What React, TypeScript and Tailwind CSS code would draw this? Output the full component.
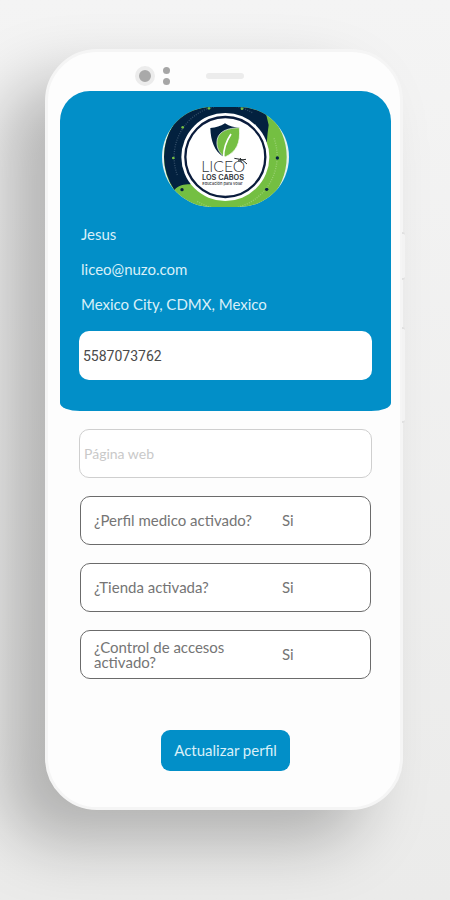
import { useState } from "react";

const SETTINGS = [
  { id: "medical", label: "¿Perfil medico activado?" },
  { id: "store", label: "¿Tienda activada?" },
  { id: "access", label: "¿Control de accesos activado?" },
];

export default function App() {
  return (
    <div className="min-h-screen overflow-hidden bg-linear-to-b from-[#f4f4f4] to-[#ebebea] pt-[49px] pr-[47px] pb-[88px] pl-[45px] font-[Lato,sans-serif] text-[15px] leading-[15px]">
      <div className="relative rounded-[52px] border-3 border-[#f5f5f5] bg-[#fdfdfd] pr-[9px] pb-9 pl-3 shadow-[-40px_32px_64px_rgba(0,0,0,0.25)]">
        <SideButtons />
        <PhoneSensors />
        <main>
          <ProfileHeader />
          <ProfileForm />
        </main>
      </div>
    </div>
  );
}

function PhoneSensors() {
  return (
    <div className="flex h-[39px] items-center pt-2 pl-[75px]">
      <div className="h-5 w-5 rounded-full border-4 border-[#ececec] bg-[#a9a9a9]" />
      <div className="ml-2 flex flex-col gap-1">
        <div className="h-[7px] w-[7px] rounded-full bg-[#a6a6a6]" />
        <div className="h-[7px] w-[7px] rounded-full bg-[#a6a6a6]" />
      </div>
      <div className="ml-9 h-[6px] w-[38px] rounded-full bg-[#ececec]" />
    </div>
  );
}

function SideButtons() {
  return (
    <>
      <div className="absolute top-[180px] -right-[5px] h-12 w-[3px] rounded-r-sm border-y-2 border-[#e0e0e0] bg-[#f3f3f3]" />
      <div className="absolute top-[275px] -right-[5px] h-24 w-[3px] rounded-r-sm border-y-2 border-[#e0e0e0] bg-[#f3f3f3]" />
    </>
  );
}

function ProfileHeader() {
  return (
    <header className="flex flex-col rounded-[30px_30px_20px_20px/30px_30px_8px_8px] bg-[#028fc8] px-[19px] pt-4 pb-[31px] text-[#d9eff8]">
      <SchoolLogo />
      <div className="mt-5 mb-[19px] flex flex-col gap-5 pl-[2px]">
        <p>Jesus</p>
        <p>liceo@nuzo.com</p>
        <p>Mexico City, CDMX, Mexico</p>
      </div>
      <input
        type="tel"
        aria-label="Teléfono"
        defaultValue="5587073762"
        className="h-[49px] w-full rounded-[10px] bg-white px-1 font-[Roboto,sans-serif] text-[14px] text-[#4a4a4a] outline-none"
      />
    </header>
  );
}

function ProfileForm() {
  return (
    <form className="flex flex-col px-[19px] pt-[18px]" onSubmit={(e) => e.preventDefault()}>
      <input
        type="url"
        aria-label="Página web"
        placeholder="Página web"
        className="h-[49px] w-full rounded-[10px] border border-[#cfcfcf] bg-white px-1 text-[14px] outline-none placeholder:text-[#c9c9c9]"
      />
      <div className="mt-[18px] flex flex-col gap-[18px] px-px">
        {SETTINGS.map((s) => (
          <SettingRow key={s.id} id={s.id} label={s.label} />
        ))}
      </div>
      <button type="submit" className="mt-[51px] h-[41px] self-center rounded-[9px] bg-[#028fc8] px-[13px] text-[#d9eff8]">
        Actualizar perfil
      </button>
    </form>
  );
}

function SettingRow({ id, label }: { id: string; label: string }) {
  const [value, setValue] = useState("Si");

  return (
    <div className="flex h-[49px] items-center rounded-[10px] border border-[#6b6b6b] bg-white pr-3 pl-[13px] text-[#757575]">
      <label htmlFor={id} className="w-[170px] shrink-0">
        {label}
      </label>
      <select
        id={id}
        value={value}
        onChange={(e) => setValue(e.target.value)}
        className="ml-[18px] h-8 min-w-0 flex-1 appearance-none bg-transparent outline-none"
      >
        <option>Si</option>
        <option>No</option>
      </select>
    </div>
  );
}

function SchoolLogo() {
  return (
    <svg viewBox="36 36 381 300" className="h-[100px] w-[127px] self-center" role="img" aria-label="Liceo Los Cabos">
      <defs>
        <clipPath id="logo-clip">
          <rect x="36" y="36" width="381" height="300" rx="150" />
        </clipPath>
      </defs>
      <g clipPath="url(#logo-clip)">
        <rect x="36" y="36" width="381" height="300" fill="#e4f1ee" />
        <circle cx="226" cy="186" r="184" fill="#75bf43" />
        <path d="M42 186A184 184 0 0 1 346 48L356 90C354 106 352 118 351 140L320 150L120 268C102 268 86 271 73 285A184 184 0 0 1 42 186Z" fill="#04213f" />
        <g fill="none" strokeWidth="4" strokeDasharray="3 4" opacity=".3">
          <path d="M82 240A155 155 0 0 1 310 55" stroke="#9fb4c4" />
          <path d="M372 130A158 158 0 0 1 140 318" stroke="#e9f7dc" />
        </g>
        <g fill="#75bf43">
          <circle cx="70" cy="189" r="4" />
          <circle cx="98" cy="97" r="4" />
          <circle cx="177" cy="40" r="4" />
          <circle cx="276" cy="41" r="4" />
        </g>
        <g fill="#04213f">
          <circle cx="96" cy="284" r="5" />
          <circle cx="350" cy="283" r="5" />
          <circle cx="382" cy="189" r="5" />
        </g>
      </g>
      <circle cx="226" cy="186" r="132" fill="#fff" />
      <circle cx="226" cy="186" r="120" fill="#fff" stroke="#0a1c3c" strokeWidth="7" />
      <path d="M181 99C198 98 211 94 225 85C239 94 252 98 268 98L218 184C194 167 182 139 181 99Z" fill="#04213f" />
      <path d="M268 98C272 144 260 170 225 186C207 176 197 154 202 132C208 107 236 99 268 98Z" fill="#75bf43" stroke="#fff" strokeWidth="2" />
      <path d="M243 117C233 132 220 154 221 187" fill="none" stroke="#fff" strokeWidth="5" />
      <text x="154" y="230" fontSize="47" fontWeight="300" fontFamily="Lato, sans-serif" fill="#2f3437">
        LICEO
      </text>
      <path d="M253 190L276 194L291 207M264 196L288 193M271 189L274 203" fill="none" stroke="#24292c" strokeWidth="3" />
      <text x="156" y="256" fontSize="22" fontWeight="600" fontFamily="Inter, sans-serif" fill="#2f3437">
        LOS CABOS
      </text>
      <text x="157" y="270" fontSize="12" fontWeight="500" fontFamily="Inter, sans-serif" fill="#2f3437">
        Educación para volar
      </text>
    </svg>
  );
}
